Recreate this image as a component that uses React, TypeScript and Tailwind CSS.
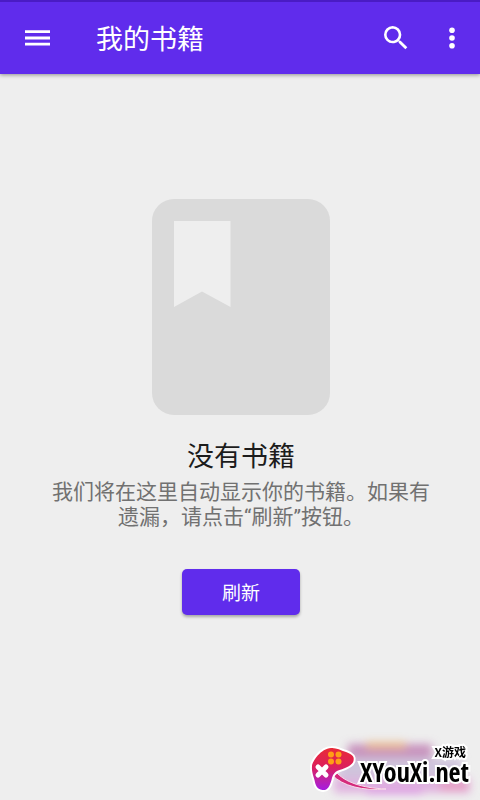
function MenuIcon() {
  return (
    <svg viewBox="0 0 26 18" className="h-[18px] w-[26px]" fill="currentColor" aria-hidden="true">
      <path d="M1 1.300h25v2.800H1zM1 7.600h25v2.800H1zM1 13.800h25v2.800H1z" />
    </svg>
  );
}

function SearchIcon() {
  return (
    <svg viewBox="0 0 24 24" className="h-8 w-8" fill="currentColor" aria-hidden="true">
      <path d="M15.5 14h-.79l-.28-.27A6.47 6.47 0 0 0 16 9.5 6.5 6.5 0 1 0 9.5 16c1.61 0 3.09-.59 4.23-1.57l.27.28v.79l5 4.99L20.49 19l-4.99-5zm-6 0C7.01 14 5 11.99 5 9.5S7.01 5 9.5 5 14 7.01 14 9.5 11.99 14 9.5 14z" />
    </svg>
  );
}

function MoreIcon() {
  return (
    <svg viewBox="0 0 8 24" className="h-6 w-2" fill="currentColor" aria-hidden="true">
      <circle cx="4" cy="4.2" r="2.8" />
      <circle cx="4" cy="12" r="2.8" />
      <circle cx="4" cy="19.8" r="2.8" />
    </svg>
  );
}

function BookIcon() {
  return (
    <svg viewBox="0 0 178 216" className="h-[216px] w-[178px]" aria-hidden="true">
      <rect width="178" height="216" rx="22" fill="#dadada" />
      <path d="M22 22h56.500v86L50 92.500 22 108z" fill="#eeeeee" />
    </svg>
  );
}

function GamepadLogo() {
  return (
    <svg viewBox="0 0 190 70" className="absolute inset-0 h-full w-full" aria-hidden="true">
      <defs>
        <linearGradient id="pad" x1="0" y1="0" x2="0" y2="1">
          <stop offset="0" stopColor="#e92b36" />
          <stop offset=".45" stopColor="#dc1f5c" />
          <stop offset=".75" stopColor="#bd22a8" />
          <stop offset="1" stopColor="#a51be0" />
        </linearGradient>
        <filter id="haze" x="-30%" y="-60%" width="160%" height="220%">
          <feGaussianBlur stdDeviation="4" />
        </filter>
      </defs>
      <g filter="url(#haze)">
        <rect x="58" y="14" width="84" height="14" fill="#c793bd" />
        <rect x="76" y="12" width="40" height="7" fill="#e9b98f" />
        <rect x="48" y="28" width="124" height="24" fill="#cfc4dc" />
        <rect x="44" y="48" width="136" height="15" fill="#e0b2df" />
        <rect x="76" y="58" width="56" height="6" fill="#dc96e2" />
        <rect x="150" y="52" width="28" height="8" fill="#e79abd" />
      </g>
      <path
        d="M46 42c9 10 25 16 50 17-24 2-43-3-54-14z"
        fill="#d52a7c"
        stroke="#f6dcea"
        strokeWidth="1"
      />
      <path
        d="M41 18C46 17.500 50 20 56 22c7 2.500 8.500 5 7.500 9-1 4-7 7-14 9-6 2-7 6-8 10-2 7-4 10.500-9 10-6-1-7-5-8-10-1-4-3-8-2.500-14C22.500 31 31 18.500 41 18z"
        fill="url(#pad)"
        stroke="#fff"
        strokeWidth="4"
        strokeLinejoin="round"
        paintOrder="stroke"
      />
      <path d="m28 37 8 8m0-8-8 8" stroke="#fff" strokeWidth="5" strokeLinecap="round" />
      <g fill="#ff9f16">
        <circle cx="41" cy="24.500" r="3" />
        <circle cx="48.500" cy="24.500" r="3" />
        <circle cx="41" cy="31.500" r="3" />
        <circle cx="48.500" cy="31.500" r="3" />
      </g>
    </svg>
  );
}

function SiteBadge() {
  return (
    <div className="fixed right-0 bottom-0 h-[70px] w-[190px] font-bold text-black">
      <GamepadLogo />
      <div className="relative flex h-full flex-col items-end pt-4 [paint-order:stroke] [-webkit-text-stroke:4px_white]">
        <span className="pr-[14px] text-xs leading-3">X游戏</span>
        <span className="pr-[11px] font-['Open_Sans_Condensed','Noto_Sans_CJK_SC',sans-serif] text-[26px] leading-7">
          XYouXi.net
        </span>
      </div>
    </div>
  );
}

export default function App() {
  return (
    <div className="min-h-screen bg-[#eeeeee] font-['Noto_Sans_CJK_SC',sans-serif]">
      <header className="flex h-[74px] items-center border-t-2 border-[#4a1bc4] bg-[#602cec] px-6 text-white shadow-[0_1px_4px_rgba(0,0,0,0.4)]">
        <button type="button" aria-label="菜单">
          <MenuIcon />
        </button>
        <h1 className="ml-[46px] flex-1 text-[27px] leading-9">我的书籍</h1>
        <button type="button" aria-label="搜索">
          <SearchIcon />
        </button>
        <button type="button" aria-label="更多选项" className="ml-9">
          <MoreIcon />
        </button>
      </header>

      <main className="flex flex-col items-center pt-[125px] pr-10 pb-20 pl-[42px] text-center">
        <BookIcon />
        <h2 className="mt-5 text-[27px] leading-10 text-[#1c1c1c]">没有书籍</h2>
        <p className="mt-[5px] px-1 font-[Roboto,'Noto_Sans_CJK_SC',sans-serif] text-[21px] leading-[25px] text-[#717171]">
          我们将在这里自动显示你的书籍。如果有遗漏，请点击“刷新”按钮。
        </p>
        <button
          type="button"
          className="mt-[39px] h-[46px] w-[118px] rounded-[5px] bg-[#602cec] text-[19px] text-white shadow-[0_2px_3px_rgba(0,0,0,0.3)]"
        >
          刷新
        </button>
      </main>

      <SiteBadge />
    </div>
  );
}
